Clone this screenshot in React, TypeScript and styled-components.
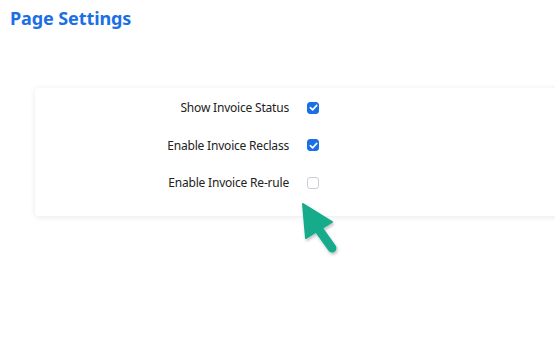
import React, { useState } from 'react';
import styled, { createGlobalStyle } from 'styled-components';

const settings = [
  { id: 'status', label: 'Show Invoice Status', checked: true },
  { id: 'reclass', label: 'Enable Invoice Reclass', checked: true },
  { id: 'rerule', label: 'Enable Invoice Re-rule', checked: false },
];

const App = () => {
  const [values, setValues] = useState(settings.map((s) => s.checked));

  const toggle = (index: number) => {
    const next = [...values];
    next[index] = !next[index];
    setValues(next);
  };

  return (
    <Page>
      <GlobalStyle />
      <Title>Page Settings</Title>
      <Card>
        {settings.map((item, index) => (
          <Row key={item.id}>
            <Label>{item.label}</Label>
            <Box $checked={values[index]} onClick={() => toggle(index)}>
              {values[index] && (
                <svg width="9" height="9" viewBox="0 0 10 10">
                  <path d="M1.5 5.2 L4 7.6 L8.6 2.6" fill="none" stroke="#fff" strokeWidth="1.8" strokeLinecap="round" strokeLinejoin="round" />
                </svg>
              )}
            </Box>
          </Row>
        ))}
      </Card>
      <Pointer width="60" height="70" viewBox="0 0 60 70">
        <defs>
          <filter id="sh" x="-30%" y="-30%" width="160%" height="160%">
            <feDropShadow dx="1" dy="2" stdDeviation="1.5" floodColor="#000" floodOpacity="0.25" />
          </filter>
        </defs>
        <g filter="url(#sh)" fill="#15ab8a" stroke="#15ab8a">
          <path d="M13 14 L42 32 L16 48 Z" strokeWidth="2" strokeLinejoin="round" />
          <path d="M27 37 L42 58" strokeWidth="9" strokeLinecap="round" fill="none" />
        </g>
      </Pointer>
    </Page>
  );
};

export default App;

const GlobalStyle = createGlobalStyle`
  html, body {
    margin: 0;
    padding: 0;
    background: #fff;
    overflow: hidden;
  }
  body {
    font-family: "Noto Sans", "Open Sans", sans-serif;
  }
`;

const Page = styled.div`
  position: relative;
  width: 555px;
  height: 357px;
  padding: 6px 0 0 10px;
  box-sizing: border-box;
  overflow: hidden;
`;

const Title = styled.h1`
  margin: 0;
  font-size: 18px;
  font-weight: 700;
  color: #1a6fe6;
  letter-spacing: -0.1px;
`;

const Card = styled.div`
  margin: 58px -12px 0 25px;
  padding: 1px 0 14px;
  background: #fff;
  border-radius: 4px;
  box-shadow: 0 1px 6px rgba(0, 0, 0, 0.09);
`;

const Row = styled.div`
  display: grid;
  grid-template-columns: 254px 13px;
  column-gap: 18px;
  align-items: center;
  height: 37.5px;
`;

const Label = styled.span`
  text-align: right;
  font-size: 12px;
  color: #222;
  letter-spacing: -0.2px;
`;

const Box = styled.span<{ $checked: boolean }>`
  display: flex;
  align-items: center;
  justify-content: center;
  width: 12px;
  height: 12px;
  box-sizing: border-box;
  border-radius: 3px;
  cursor: pointer;
  background: ${(p) => (p.$checked ? '#1a6fe6' : '#fff')};
  border: 1px solid ${(p) => (p.$checked ? '#1a6fe6' : '#c9ced4')};
`;

const Pointer = styled.svg`
  position: absolute;
  left: 290px;
  top: 190px;
`;
